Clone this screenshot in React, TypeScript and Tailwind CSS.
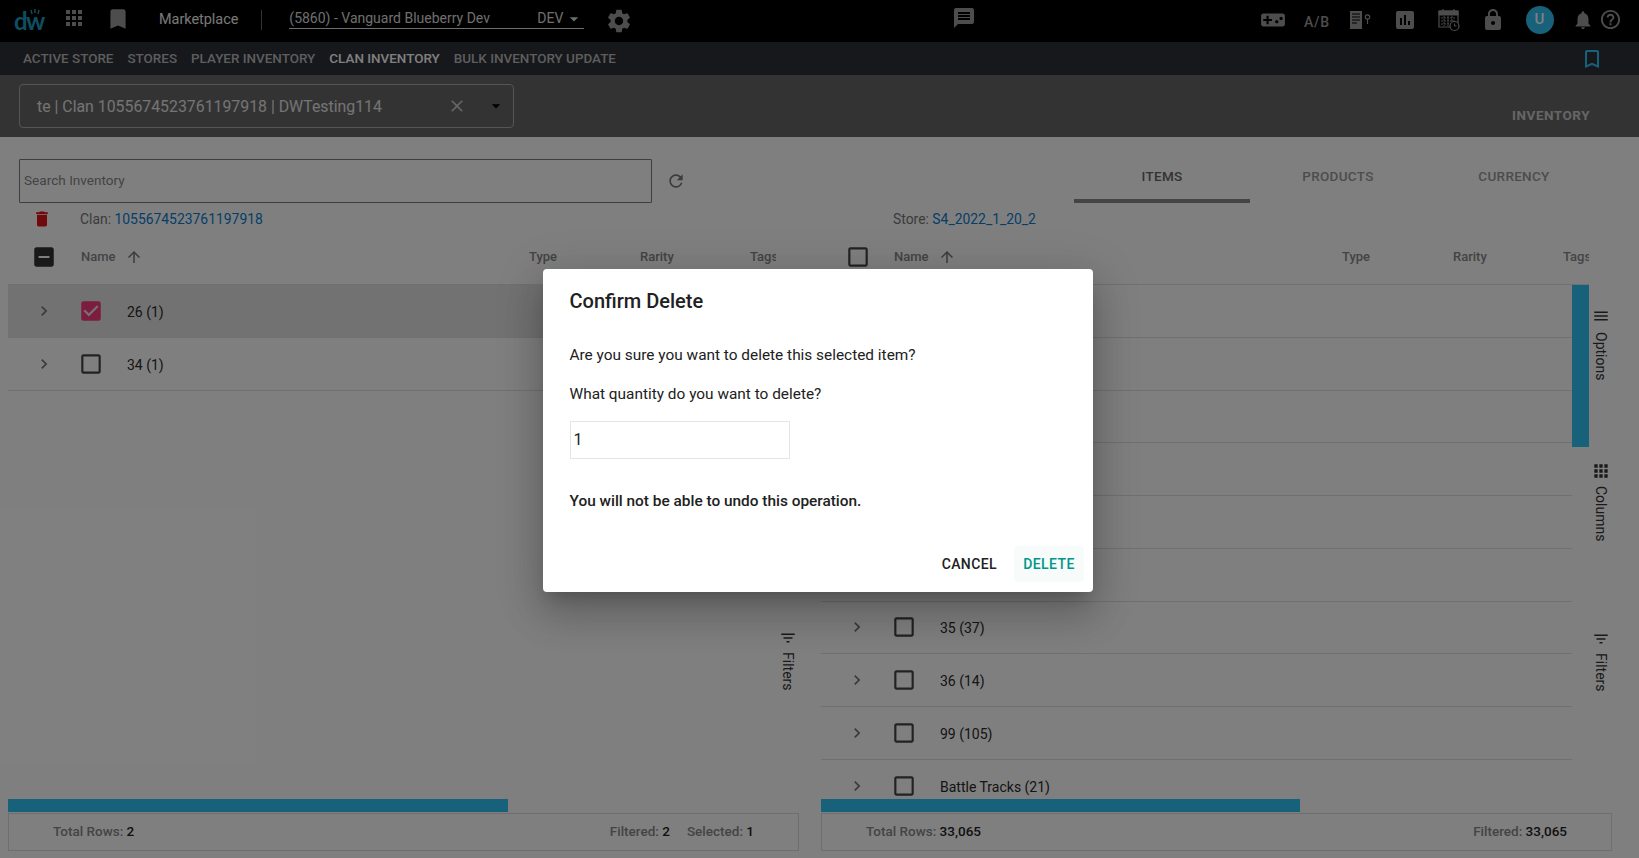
import type { ReactNode } from 'react'
import {
  MdApps,
  MdArrowDropDown,
  MdArrowUpward,
  MdAssessment,
  MdBookmark,
  MdBookmarkBorder,
  MdCheckBox,
  MdCheckBoxOutlineBlank,
  MdChevronRight,
  MdClose,
  MdDelete,
  MdFilterList,
  MdHelpOutline,
  MdIndeterminateCheckBox,
  MdLock,
  MdMenu,
  MdMessage,
  MdNotifications,
  MdRefresh,
  MdSettings,
  MdVideogameAsset,
} from 'react-icons/md'

const subNav = ['ACTIVE STORE', 'STORES', 'PLAYER INVENTORY', 'CLAN INVENTORY', 'BULK INVENTORY UPDATE']
// the first six rows sit behind the dialog, their labels never show
const storeRows = ['', '', '', '', '', '', '35 (37)', '36 (14)', '99 (105)', 'Battle Tracks (21)']

function DwLogo() {
  return (
    <div className="relative ml-[14px] h-[26px] w-[30px] text-[24px] leading-[26px] font-bold font-['Lato',sans-serif] text-[#1f9cc0] tracking-[-1.5px]">
      dw
      <svg className="absolute left-[14px] top-[1px]" width="14" height="6" viewBox="0 0 14 6">
        <path d="M3 1l1 4M7 0v4M11 1l-1 4" stroke="#1f9cc0" strokeWidth="1.4" />
      </svg>
    </div>
  )
}

function DocKeyIcon() {
  return (
    <svg width="24" height="20" viewBox="0 0 24 20" fill="#9a9a9a">
      <path d="M1 1h12v18H1z" />
      <path d="M3 4h8M3 7h8M3 10h8M3 13h5" stroke="#000" strokeWidth="1" />
      <circle cx="18.5" cy="7" r="2.2" fill="none" stroke="#9a9a9a" strokeWidth="1.2" />
      <path d="M18.5 9v5" stroke="#9a9a9a" strokeWidth="1.2" />
    </svg>
  )
}

function CalendarClockIcon() {
  return (
    <svg width="24" height="24" viewBox="0 0 24 24" fill="none" stroke="#9a9a9a">
      <path d="M2 3h19v16H2z" strokeWidth="1.2" />
      <path d="M2 3h19v4H2z" fill="#9a9a9a" strokeWidth="1" />
      <path d="M6 1v3M17 1v3" strokeWidth="1.2" />
      <path d="M4 10h15M4 13h15M4 16h10M7 8v10M11 8v10M15 8v6" strokeWidth="1" strokeDasharray="2 1" />
      <circle cx="17.5" cy="18" r="4.5" fill="#000" strokeWidth="1.2" />
      <path d="M17.5 15.5V18h2" strokeWidth="1" />
    </svg>
  )
}

function TopBar() {
  const box = 'flex w-[44px] items-center justify-center text-[#9a9a9a]'
  return (
    <div className="flex h-[42px] items-center bg-black text-[#9a9a9a]">
      <DwLogo />
      <MdApps size={24} className="ml-[18px] mb-[6px]" />
      <MdBookmark size={26} className="ml-[19px] mb-[4px]" />
      <span className="ml-[28px] mb-[2px] text-[14.4px] text-[#f0f0f0]">Marketplace</span>
      <div className="ml-[23px] mb-[2px] h-[20px] w-px bg-[#666]" />
      <div className="ml-[27px] mb-[4px] flex h-[20px] w-[295px] items-center border-b border-[#ddd] text-[14px] text-[#ddd]">
        <span>(5860) - Vanguard Blueberry Dev</span>
        <span className="ml-auto">DEV</span>
        <MdArrowDropDown size={20} className="ml-[1px]" />
      </div>
      <MdSettings size={28} className="ml-[21px]" />
      <MdMessage size={24} className="ml-[319px] mb-[6px]" />
      <div className="ml-auto mr-[20px] mb-[3px] flex items-center">
        <div className={box}><MdVideogameAsset size={26} /></div>
        <div className={box}><span className="mt-[5px] text-[14px] font-medium tracking-[0.8px]">A/B</span></div>
        <div className={box}><DocKeyIcon /></div>
        <div className={box}><MdAssessment size={24} /></div>
        <div className={box}><CalendarClockIcon /></div>
        <div className={box}><MdLock size={24} /></div>
        <div className="flex w-[49px] justify-center">
          <div className="flex h-[28px] w-[28px] items-center justify-center rounded-full bg-[#2ec2f4] text-[15px] font-medium text-white">U</div>
        </div>
        <div className="flex w-[37px] justify-center"><MdNotifications size={22} /></div>
        <div className="flex w-[18px] justify-center"><MdHelpOutline size={23} className="shrink-0" /></div>
      </div>
    </div>
  )
}

function SubNav() {
  return (
    <div className="flex h-[33px] items-center bg-[#2d3036] pl-[23px] pr-[35px]">
      {subNav.map(item => (
        <span
          key={item}
          className={`mr-[14px] mt-[2px] text-[13.44px] font-medium ${item === 'CLAN INVENTORY' ? 'text-white' : 'text-[#bbb]'}`}
        >
          {item}
        </span>
      ))}
      <MdBookmarkBorder size={24} className="ml-auto text-[#2ec2f4]" />
    </div>
  )
}

function StoreHeader() {
  return (
    <div className="flex h-[62px] items-start bg-[#666] pl-[19px] pr-[49px] pt-[9px]">
      <div className="flex h-[44px] w-[495px] items-center rounded-[4px] border border-[#aaa] pl-[17px] pr-[7px] text-[15.85px] text-[#e8e8e8]">
        <span className="mt-[1px]">te | Clan 1055674523761197918 | DWTesting114</span>
        <MdClose size={20} className="ml-auto text-[#ccc]" />
        <MdArrowDropDown size={20} className="ml-[19px] text-black" />
      </div>
      <span className="ml-auto mt-[21px] text-[13.5px] font-bold tracking-[0.5px] text-[#ccc]">INVENTORY</span>
    </div>
  )
}

function SearchRow() {
  const tabClass = 'flex h-[54px] w-[176px] items-start justify-center pt-[17px] text-[13.5px] font-medium tracking-[0.3px]'
  return (
    <div className="flex items-start pl-[19px] pr-[37px] pt-[12px] pb-[4px]">
      <div className="mt-[10px] flex h-[44px] w-[633px] items-center rounded-[1px] border border-[#7d7d7d] pl-[4px] pb-[2px] text-[13.6px] text-[#888]">
        Search Inventory
      </div>
      <MdRefresh size={20} className="ml-[14px] mt-[22px] text-[#777]" />
      <div className="ml-auto flex">
        <div className={`${tabClass} border-b-[4px] border-[#888] text-[#666]`}>ITEMS</div>
        <div className={`${tabClass} text-[#999]`}>PRODUCTS</div>
        <div className={`${tabClass} text-[#999]`}>CURRENCY</div>
      </div>
    </div>
  )
}

function GridHeader({ leftCheck }: { leftCheck: ReactNode }) {
  return (
    <div className="flex h-[56px] w-[768px] items-center overflow-hidden border-b border-[#e0e0e0] pl-[24px] text-[13px] font-medium text-[#888]">
      <div className="w-[24px] shrink-0">{leftCheck}</div>
      <div className="ml-[25px] flex w-[448px] shrink-0 items-center">
        <span>Name</span>
        <MdArrowUpward size={18} className="ml-[9px] text-[#777]" />
      </div>
      <span className="w-[111px] shrink-0">Type</span>
      <span className="w-[110px] shrink-0">Rarity</span>
      <span className="shrink-0">Tags</span>
    </div>
  )
}

function Row({ label, selected }: { label: string; selected?: boolean }) {
  return (
    <div className={`flex h-[52.75px] items-center border-b border-[#e0e0e0] pl-[26px] text-[14px] text-[#2a2a2a] ${selected ? 'bg-[#e4e4e4]' : ''}`}>
      <MdChevronRight size={20} className="text-[#777]" />
      {selected ? (
        <MdCheckBox size={26} className="ml-[24px] text-[#f8397f]" />
      ) : (
        <MdCheckBoxOutlineBlank size={26} className="ml-[24px] text-[#444]" />
      )}
      <span className="ml-[23px] mt-[3px]">{label}</span>
    </div>
  )
}

function SideTool({ icon, label, className }: { icon: ReactNode; label: string; className: string }) {
  return (
    <div className={`flex flex-col items-center text-[#333] ${className}`}>
      {icon}
      <span className="mt-[5px] text-[14px] [writing-mode:vertical-rl]">{label}</span>
    </div>
  )
}

function GridFooter({ children }: { children: ReactNode }) {
  return (
    <div className="mt-[1px] flex h-[38px] w-[791px] items-center justify-between border border-[#dcdcdc] pl-[44px] pr-[44px] pb-[2px] text-[13.5px] font-medium text-[#888]">
      {children}
    </div>
  )
}

function Stat({ label, value }: { label: string; value: string }) {
  return (
    <span>
      {label}: <span className="text-[#222]">{value}</span>
    </span>
  )
}

function ClanPanel() {
  return (
    <div className="ml-[8px] w-[791px]">
      <div className="flex h-[22px] items-center pl-[24px] pt-[2px] text-[13.9px] text-[#777]">
        <MdDelete size={20} className="text-[#e01018]" />
        <span className="ml-[28px]">
          Clan: <span className="text-[#0a7ccf]">1055674523761197918</span>
        </span>
      </div>
      <GridHeader leftCheck={<MdIndeterminateCheckBox size={26} className="-ml-[1px] text-[#333]" />} />
      <div className="flex h-[514px]">
        <div className="w-[768px]">
          <Row label="26 (1)" selected />
          <Row label="34 (1)" />
        </div>
        <SideTool
          className="w-[23px] pt-[344px]"
          label="Filters"
          icon={<MdFilterList size={18} />}
        />
      </div>
      <div className="h-[13px] w-[500px] bg-[#2ec2f4]" />
      <GridFooter>
        <Stat label="Total Rows" value="2" />
        <div className="flex gap-[17px]">
          <Stat label="Filtered" value="2" />
          <Stat label="Selected" value="1" />
        </div>
      </GridFooter>
    </div>
  )
}

function StorePanel() {
  return (
    <div className="ml-[22px] w-[791px]">
      <div className="flex h-[22px] items-center pl-[72px] pt-[2px] text-[13.9px] text-[#777]">
        Store:&nbsp;<span className="text-[#0a7ccf]">S4_2022_1_20_2</span>
      </div>
      <GridHeader leftCheck={<MdCheckBoxOutlineBlank size={26} className="text-[#444]" />} />
      <div className="flex h-[514px] overflow-hidden">
        <div className="w-[751px]">
          {storeRows.map((label, i) => (
            <Row key={i} label={label} />
          ))}
        </div>
        <div className="w-[17px]">
          <div className="h-[162px] bg-[#2ec2f4]" />
        </div>
        <div className="w-[23px]">
          <SideTool className="h-[176px] pt-[22px]" label="Options" icon={<MdMenu size={18} className="mb-[2px]" />} />
          <SideTool className="h-[169px]" label="Columns" icon={<MdApps size={20} />} />
          <SideTool className="" label="Filters" icon={<MdFilterList size={18} />} />
        </div>
      </div>
      <div className="h-[13px] w-[479px] bg-[#2ec2f4]" />
      <GridFooter>
        <Stat label="Total Rows" value="33,065" />
        <Stat label="Filtered" value="33,065" />
      </GridFooter>
    </div>
  )
}

function ConfirmDialog() {
  return (
    <div className="absolute inset-0 bg-black/50 pl-[543px] pt-[269px]">
      <div className="flex h-[323px] w-[550px] flex-col rounded-[4px] bg-white pl-[26.5px] pr-[26px] pt-[16px] shadow-[0_11px_15px_-7px_rgba(0,0,0,0.2),0_24px_38px_3px_rgba(0,0,0,0.14),0_9px_46px_8px_rgba(0,0,0,0.12)]">
        <h2 className="text-[20px] leading-[32px] font-medium text-[#212121]">Confirm Delete</h2>
        <p className="mt-[26px] text-[15.4px] leading-[24px] text-[#212121]">Are you sure you want to delete this selected item?</p>
        <p className="mt-[15px] text-[15.4px] leading-[24px] text-[#212121]">What quantity do you want to delete?</p>
        <div className="mt-[15px] flex h-[38px] w-[220px] items-center border border-[#e4e4e4] pl-[3px] text-[16px] text-[#212121]">1</div>
        <p className="mt-[30px] text-[15.4px] leading-[24px] font-medium text-[#212121]">You will not be able to undo this operation.</p>
        <div className="mt-[33px] -mr-[17px] flex items-center justify-end">
          <button className="mr-[17px] text-[14px] font-medium tracking-[0.4px] text-[#212121]">CANCEL</button>
          <button className="h-[36px] w-[70px] rounded-[4px] bg-[#f7fcfb] text-[14px] font-medium tracking-[0.4px] text-[#009688]">DELETE</button>
        </div>
      </div>
    </div>
  )
}

export default function App() {
  return (
    <div className="relative h-[858px] w-[1639px] overflow-hidden bg-white font-['Roboto',sans-serif]">
      <TopBar />
      <SubNav />
      <StoreHeader />
      <SearchRow />
      <div className="flex">
        <ClanPanel />
        <StorePanel />
      </div>
      <ConfirmDialog />
    </div>
  )
}
